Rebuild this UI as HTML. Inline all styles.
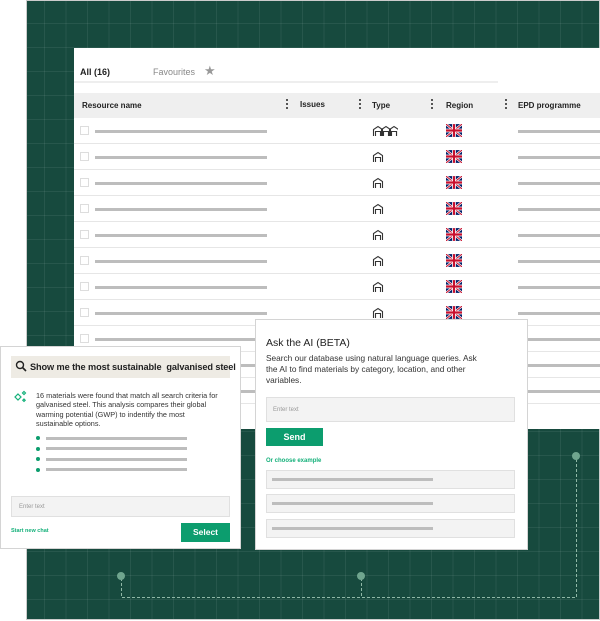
<!DOCTYPE html>
<html><head><style>
*{margin:0;padding:0;box-sizing:border-box}
body{width:600px;height:621px;background:#fff;position:relative;overflow:hidden;font-family:"Liberation Sans",sans-serif;color:#222}
.bg{position:absolute;left:26px;top:0;width:574px;height:620px;background-color:#174a3e;
background-image:linear-gradient(90deg,rgba(255,255,255,.07) 1px,transparent 1px),linear-gradient(0deg,rgba(255,255,255,.07) 1px,transparent 1px);
background-size:21.5px 24px;background-position:17px 0,0 23px;border:1px solid #ccc}
.abs{position:absolute}
.table{left:74px;top:48px;width:526px;height:381px;background:#fff;overflow:hidden}
.hdr{position:absolute;left:0;top:45px;width:526px;height:25px;background:#efefef;font-size:8px;font-weight:bold}
.hdr span{position:absolute;top:8px}
.dots{position:absolute;top:6px;width:2px;height:10px;background:linear-gradient(#555 0 2px,transparent 2px 4px,#555 4px 6px,transparent 6px 8px,#555 8px 10px)}
.row{position:absolute;left:0;width:526px;height:26px;border-bottom:1px solid #e6e6e6}
.cb{position:absolute;left:6px;top:8px;width:9px;height:9px;border:1px solid #ddd}
.bar{position:absolute;height:3px;background:#bdbdbd}
.flag{position:absolute;left:372px;top:6px;width:16px;height:13px}
.ic{position:absolute;left:298px;top:7px}
.panel{background:#fff;border:1px solid #d4d4d4}
.gbtn{background:#0c9d6e;color:#fff;text-align:center;font-weight:bold;position:absolute}
.inp{position:absolute;background:#f3f3f3;border:1px solid #e0e0e0;font-size:6px;color:#999}
.dot{position:absolute;width:8px;height:8px;border-radius:50%;background:#6fa58e}
</style></head><body>
<div class="bg abs"></div>
<svg class="abs" style="left:0;top:0" width="600" height="621">
<g stroke="#8fb8a6" stroke-width="1" stroke-dasharray="3,2" fill="none">
<path d="M121.5 578V597.5H576.5V458"/><path d="M361.5 578V597"/></g>
</svg>
<div class="dot" style="left:117px;top:572px"></div>
<div class="dot" style="left:357px;top:572px"></div>
<div class="dot" style="left:572px;top:452px"></div>

<div class="abs table">
<div class="abs" style="left:6px;top:19px;font-size:9px;font-weight:bold">All (16)</div>
<div class="abs" style="left:79px;top:19px;font-size:9px;color:#888">Favourites</div>
<div class="abs" style="left:130px;top:15px;font-size:13px;color:#999">★</div>
<div class="abs" style="left:0;top:33px;width:424px;height:2px;background:#eee"></div>
<div class="hdr">
<span style="left:8px">Resource name</span><div class="dots" style="left:212px"></div>
<span style="left:226px;top:7px">Issues</span><div class="dots" style="left:285px"></div>
<span style="left:298px">Type</span><div class="dots" style="left:357px"></div>
<span style="left:372px">Region</span><div class="dots" style="left:431px"></div>
<span style="left:444px">EPD programme</span>
</div>
<div id="rows"></div>
</div>

<div class="abs panel" style="left:0;top:346px;width:241px;height:203px">
<div class="abs" style="left:10px;top:9px;width:219px;height:22px;background:#eeebe4;font-size:9.2px;font-weight:bold;padding:6px 0 0 19px;white-space:nowrap;letter-spacing:-0.1px">Show me the most sustainable&nbsp; galvanised steel
<svg class="abs" style="left:4px;top:4px" width="12" height="12"><circle cx="5" cy="5" r="3.5" stroke="#222" stroke-width="1.4" fill="none"/><path d="M7.5 7.5L11 11" stroke="#222" stroke-width="1.6"/></svg></div>
<svg class="abs" style="left:12px;top:43px" width="14" height="14" fill="none" stroke="#14b07a" stroke-width="1.2"><path d="M5 4L8 7L5 10L2 7Z"/><path d="M11 1.5l1.5 1.5-1.5 1.5-1.5-1.5z"/><path d="M11 9l1.2 1.2-1.2 1.2-1.2-1.2z"/></svg>
<div class="abs" style="left:35px;top:44px;width:184px;font-size:7.3px;line-height:9.4px;color:#333">16 materials were found that match all search criteria for galvanised steel. This analysis compares their global warming potential (GWP) to indentify the most sustainable options.</div>
<div id="bul"></div>
<div class="inp" style="left:10px;top:149px;width:219px;height:21px;padding:7px 0 0 7px">Enter text</div>
<div class="abs" style="left:10px;top:181px;font-size:5.5px;color:#14b07a;font-weight:bold">Start new chat</div>
<div class="gbtn" style="left:180px;top:176px;width:49px;height:19px;font-size:8.5px;line-height:19px">Select</div>
</div>

<div class="abs panel" style="left:255px;top:319px;width:273px;height:231px">
<div class="abs" style="left:10px;top:17px;font-size:10.5px;color:#222">Ask the AI (BETA)</div>
<div class="abs" style="left:10px;top:33px;width:215px;font-size:8.3px;line-height:10.8px;color:#333">Search our database using natural language queries. Ask the AI to find materials by category, location, and other variables.</div>
<div class="inp" style="left:10px;top:77px;width:249px;height:25px;padding:9px 0 0 6px">Enter text</div>
<div class="gbtn" style="left:10px;top:108px;width:57px;height:18px;font-size:9px;line-height:18px">Send</div>
<div class="abs" style="left:10px;top:138px;font-size:6px;color:#14b07a;font-weight:bold">Or choose example</div>
<div class="inp" style="left:10px;top:150px;width:249px;height:19px"><div class="bar" style="left:5px;top:7px;width:161px"></div></div>
<div class="inp" style="left:10px;top:174px;width:249px;height:19px"><div class="bar" style="left:5px;top:7px;width:161px"></div></div>
<div class="inp" style="left:10px;top:199px;width:249px;height:19px"><div class="bar" style="left:5px;top:7px;width:161px"></div></div>
</div>

<script>
var flag='<svg class="flag" viewBox="0 0 60 48"><rect width="60" height="48" fill="#012169"/><path d="M0 0L60 48M60 0L0 48" stroke="#fff" stroke-width="9"/><path d="M0 0L60 48M60 0L0 48" stroke="#C8102E" stroke-width="4"/><path d="M30 0V48M0 24H60" stroke="#fff" stroke-width="14"/><path d="M30 0V48M0 24H60" stroke="#C8102E" stroke-width="8"/></svg>';
var h1='<path d="M1.5 11V4.5L6 1.5L10.5 4.5V11M3.5 11V6.5H8.5V11" stroke="#333" stroke-width="1.1" fill="none"/>';
var s='';
for(var i=0;i<11;i++){var t=70+i*26;
var ic=i==0?'<svg class="ic" width="26" height="12">'+h1+'<g transform="translate(8,0)">'+h1+'</g><g transform="translate(16,0)">'+h1+'</g></svg>':'<svg class="ic" width="12" height="12">'+h1+'</svg>';
s+='<div class="row" style="top:'+t+'px"><div class="cb"></div><div class="bar" style="left:21px;top:12px;width:172px"></div>'+ic+flag+'<div class="bar" style="left:444px;top:12px;width:82px"></div></div>';}
document.getElementById('rows').innerHTML=s;
var b='';for(var j=0;j<4;j++){var y=89+j*10.5;b+='<div class="abs" style="left:35px;top:'+y+'px;width:4px;height:4px;border-radius:50%;background:#0c9d6e"></div><div class="bar" style="left:45px;top:'+(y+0.5)+'px;width:141px"></div>';}
document.getElementById('bul').innerHTML=b;
</script>
</body></html>
